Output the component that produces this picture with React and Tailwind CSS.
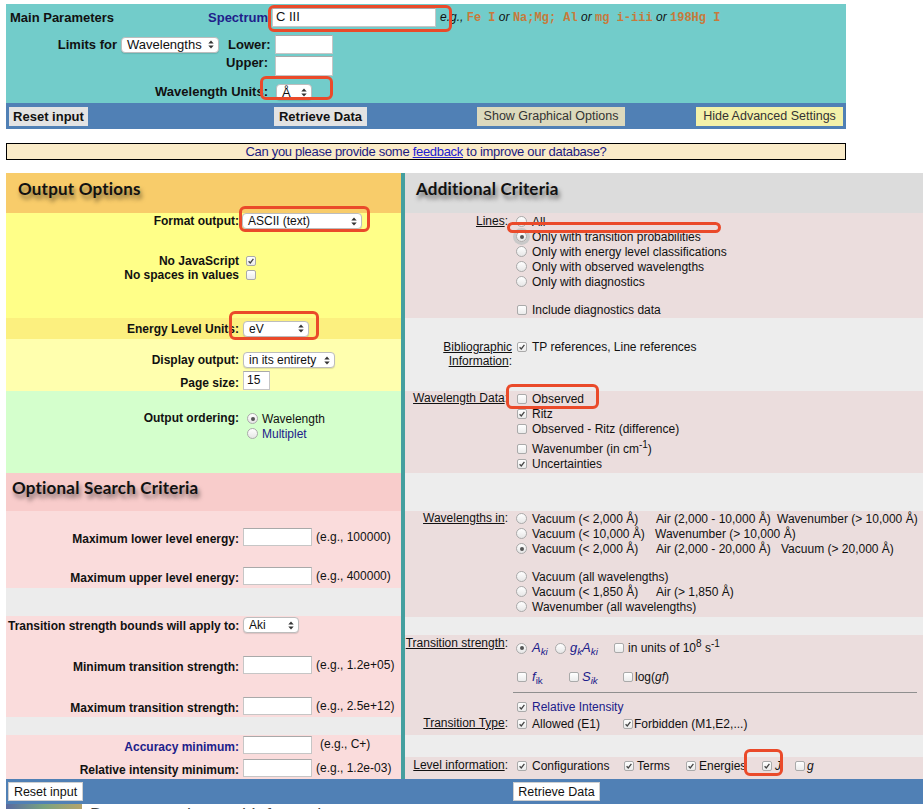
import React from 'react'

const NAVY = 'text-[#20208a]'

function Arrows() {
  return (
    <svg viewBox="0 0 6 10" className="h-[9px] w-[6px] shrink-0" aria-hidden>
      <path d="M0 4 L3 0.5 L6 4 Z" fill="#333" />
      <path d="M0 6 L3 9.5 L6 6 Z" fill="#333" />
    </svg>
  )
}

function Sel({ w, children }) {
  return (
    <div
      className={`flex h-[16px] items-center justify-between rounded-[4px] border border-[#bdbdbd] bg-white pl-[5px] pr-[4px] font-normal leading-none text-[#111] shadow-[0_1px_1px_rgba(0,0,0,0.12)] ${w}`}
    >
      <span className="whitespace-nowrap">{children}</span>
      <Arrows />
    </div>
  )
}

function Inp({ w, h = 'h-[18px]', children }) {
  return (
    <div className={`border border-[#c6c6c6] border-t-[#a9a9a9] bg-white pl-[3px] font-normal leading-[16px] text-[#111] ${w} ${h}`}>
      {children}
    </div>
  )
}

function Cb({ on }) {
  return (
    <span className="flex w-[11px] shrink-0 justify-center">
      <span className="flex h-[10px] w-[10px] items-center justify-center rounded-[2px] border border-[#aaaaaa] bg-linear-to-b from-white to-[#ebebeb]">
        {on && (
          <svg viewBox="0 0 10 10" className="h-[8px] w-[8px]" aria-hidden>
            <path d="M2 5.3 L4.1 7.4 L8 2.4" fill="none" stroke="#444" strokeWidth="1.6" />
          </svg>
        )}
      </span>
    </span>
  )
}

function Rd({ on, focus }) {
  return (
    <span className={`flex h-[11px] w-[11px] shrink-0 items-center justify-center rounded-full border border-[#aaaaaa] bg-linear-to-b from-white to-[#e6e6e6] ${focus ? 'shadow-[0_0_0_3px_#c9c9c9]' : ''}`}>
      {on && <span className="h-[4px] w-[4px] rounded-full bg-[#555]" />}
    </span>
  )
}

function Mark({ cls }) {
  return <div className={`pointer-events-none absolute rounded-[6px] border-[3px] border-[#ea4a2a] ${cls}`} />
}

function Title({ children, cls }) {
  return (
    <div className={`font-['Lato',sans-serif] text-[17px] font-bold leading-[19px] tracking-[0.2px] text-[#111] [text-shadow:2px_4px_4px_rgba(0,0,0,0.5)] ${cls}`}>
      {children}
    </div>
  )
}

function LLabel({ children, cls = '' }) {
  return <span className={`w-[233px] shrink-0 whitespace-nowrap text-right font-bold leading-[14px] ${cls}`}>{children}</span>
}

function RLabel({ children }) {
  return <div className="w-[103px] shrink-0 whitespace-nowrap text-right leading-[15px]">{children}</div>
}

function LeftColumn() {
  return (
    <div className="w-[395px] shrink-0">
      <div className="h-[40px] bg-[#f8cc6a] pl-[12px] pt-[6px]">
        <Title>Output Options</Title>
      </div>

      <div className="h-[105px] bg-[#ffff88]">
        <div className="flex h-[16px] items-center">
          <LLabel>Format output:</LLabel>
          <div className="ml-[3px]">
            <Sel w="w-[120px]">ASCII (text)</Sel>
          </div>
        </div>
        <div className="mt-[25px] flex h-[14px] items-center">
          <LLabel>No JavaScript</LLabel>
          <span className="ml-[6px]"><Cb on /></span>
        </div>
        <div className="flex h-[14px] items-center">
          <LLabel>No spaces in values</LLabel>
          <span className="ml-[6px]"><Cb /></span>
        </div>
      </div>

      <div className="flex h-[21px] items-center bg-[#fcf07f]">
        <LLabel>Energy Level Units:</LLabel>
        <div className="ml-[4px]">
          <Sel w="w-[66px]">eV</Sel>
        </div>
      </div>

      <div className="h-[52px] bg-[#ffffae] pt-[13px]">
        <div className="flex h-[16px] items-center">
          <LLabel>Display output:</LLabel>
          <div className="ml-[4px]">
            <Sel w="w-[92px]">in its entirety</Sel>
          </div>
        </div>
        <div className="mt-[3px] flex h-[19px] items-end">
          <LLabel>Page size:</LLabel>
          <div className="ml-[4px]">
            <Inp w="w-[27px]" h="h-[19px]">15</Inp>
          </div>
        </div>
      </div>

      <div className="h-[82px] bg-[#d4ffcc] pt-[20px]">
        <div className="flex">
          <LLabel cls="leading-[15px]">Output ordering:</LLabel>
          <div className="ml-[8px] flex flex-col">
            <div className="flex h-[15px] items-center gap-[4px]">
              <Rd on /> <span>Wavelength</span>
            </div>
            <div className="flex h-[15px] items-center gap-[4px]">
              <Rd /> <span className={NAVY}>Multiplet</span>
            </div>
          </div>
        </div>
      </div>

      <div className="h-[38px] bg-[#f8cccb] pl-[6px] pt-[5px]">
        <Title>Optional Search Criteria</Title>
      </div>

      <div className="h-[77px] bg-[#fadcdc] pt-[17px]">
        <div className="flex h-[18px] items-end">
          <LLabel>Maximum lower level energy:</LLabel>
          <div className="ml-[4px]"><Inp w="w-[69px]" /></div>
          <span className="mb-[2px] ml-[4px] leading-[14px]">(e.g., 100000)</span>
        </div>
        <div className="mt-[21px] flex h-[18px] items-end">
          <LLabel>Maximum upper level energy:</LLabel>
          <div className="ml-[4px]"><Inp w="w-[69px]" /></div>
          <span className="mb-[2px] ml-[4px] leading-[14px]">(e.g., 400000)</span>
        </div>
      </div>

      <div className="h-[28px] bg-[#ececec]" />

      <div className="h-[101px] bg-[#fadcdc] pt-[1px]">
        <div className="flex h-[16px] items-end">
          <LLabel cls="pl-[2px]">Transition strength bounds will apply to:</LLabel>
          <div className="ml-[4px]">
            <Sel w="w-[56px]">Aki</Sel>
          </div>
        </div>
        <div className="mt-[23px] flex h-[18px] items-end">
          <LLabel>Minimum transition strength:</LLabel>
          <div className="ml-[4px]"><Inp w="w-[69px]" /></div>
          <span className="mb-[2px] ml-[4px] leading-[14px]">(e.g., 1.2e+05)</span>
        </div>
        <div className="mt-[23px] flex h-[18px] items-end">
          <LLabel>Maximum transition strength:</LLabel>
          <div className="ml-[4px]"><Inp w="w-[69px]" /></div>
          <span className="mb-[2px] ml-[4px] leading-[14px]">(e.g., 2.5e+12)</span>
        </div>
      </div>

      <div className="h-[18px] bg-[#ececec]" />

      <div className="h-[44px] bg-[#fadcdc] pt-[1px]">
        <div className="flex h-[18px] items-end">
          <LLabel cls={NAVY}>Accuracy minimum:</LLabel>
          <div className="ml-[4px]"><Inp w="w-[69px]" /></div>
          <span className="mb-[3px] ml-[8px] leading-[14px]">(e.g., C+)</span>
        </div>
        <div className="mt-[5px] flex h-[18px] items-end">
          <LLabel>Relative intensity minimum:</LLabel>
          <div className="ml-[4px]"><Inp w="w-[69px]" /></div>
          <span className="mb-[2px] ml-[4px] leading-[14px]">(e.g., 1.2e-03)</span>
        </div>
      </div>
    </div>
  )
}

function Opt({ type = 'cb', on, focus, children, cls = '' }) {
  return (
    <div className={`flex h-[15px] items-center ${cls}`}>
      {type === 'cb' ? <Cb on={on} /> : <Rd on={on} focus={focus} />}
      <span className="ml-[5px] whitespace-nowrap">{children}</span>
    </div>
  )
}

function RightColumn() {
  return (
    <div className="w-[518px] shrink-0">
      <div className="h-[40px] bg-[#dcdcdc] pl-[11px] pt-[6px]">
        <Title>Additional Criteria</Title>
      </div>

      <div className="h-[105px] bg-[#ebdddd] pt-[1px]">
        <div className="flex">
          <RLabel><span className="underline">Lines</span>:</RLabel>
          <div className="ml-[8px] flex flex-col">
            <Opt type="rd">All</Opt>
            <Opt type="rd" on focus>Only with transition probabilities</Opt>
            <Opt type="rd">Only with energy level classifications</Opt>
            <Opt type="rd">Only with observed wavelengths</Opt>
            <Opt type="rd">Only with diagnostics</Opt>
            <Opt cls="mt-[13px]">Include diagnostics data</Opt>
          </div>
        </div>
      </div>

      <div className="h-[73px] bg-[#ededed] pt-[22px]">
        <div className="flex">
          <div className="w-[107px] shrink-0 text-right leading-[14px]">
            <span className="underline">Bibliographic</span>
            <br />
            <span className="underline">Information</span>:
          </div>
          <div className="ml-[4px] flex h-[14px] items-center">
            <Cb on />
            <span className="ml-[5px]">TP references, Line references</span>
          </div>
        </div>
      </div>

      <div className="h-[82px] bg-[#ebdddd]">
        <div className="flex">
          <RLabel><span className="underline">Wavelength Data</span>:</RLabel>
          <div className="ml-[8px] flex flex-col">
            <Opt>Observed</Opt>
            <Opt on>Ritz</Opt>
            <Opt>Observed - Ritz (difference)</Opt>
            <Opt cls="mt-[5px]">
              Wavenumber (in cm<sup className="text-[10px]">-1</sup>)
            </Opt>
            <Opt on>Uncertainties</Opt>
          </div>
        </div>
      </div>

      <div className="h-[38px] bg-[#ededed]" />

      <div className="h-[106px] bg-[#ebdddd]">
        <div className="flex">
          <RLabel><span className="underline">Wavelengths in</span>:</RLabel>
          <div className="ml-[8px] flex flex-col">
            <div className="flex h-[15px] items-center whitespace-nowrap">
              <Rd /><span className="ml-[5px] w-[124px]">Vacuum (&lt; 2,000 Å)</span>
              <span className="w-[121px]">Air (2,000 - 10,000 Å)</span>
              <span>Wavenumber (&gt; 10,000 Å)</span>
            </div>
            <div className="flex h-[15px] items-center whitespace-nowrap">
              <Rd /><span className="ml-[5px] w-[123px]">Vacuum (&lt; 10,000 Å)</span>
              <span>Wavenumber (&gt; 10,000 Å)</span>
            </div>
            <div className="flex h-[15px] items-center whitespace-nowrap">
              <Rd on /><span className="ml-[5px] w-[124px]">Vacuum (&lt; 2,000 Å)</span>
              <span className="w-[125px]">Air (2,000 - 20,000 Å)</span>
              <span>Vacuum (&gt; 20,000 Å)</span>
            </div>
            <div className="mt-[13px] flex h-[15px] items-center whitespace-nowrap">
              <Rd /><span className="ml-[5px]">Vacuum (all wavelengths)</span>
            </div>
            <div className="flex h-[15px] items-center whitespace-nowrap">
              <Rd /><span className="ml-[5px] w-[124px]">Vacuum (&lt; 1,850 Å)</span>
              <span>Air (&gt; 1,850 Å)</span>
            </div>
            <div className="flex h-[15px] items-center whitespace-nowrap">
              <Rd /><span className="ml-[5px]">Wavenumber (all wavelengths)</span>
            </div>
          </div>
        </div>
      </div>

      <div className="h-[18px] bg-[#ededed]" />

      <div className="h-[100px] bg-[#ebdddd] pt-[1px]">
        <div className="flex">
          <RLabel><span className="underline">Transition strength</span>:</RLabel>
          <div className="ml-[8px] flex h-[24px] items-center whitespace-nowrap">
            <Rd on />
            <i className={`ml-[5px] w-[23px] text-[13px] ${NAVY}`}>A<sub>ki</sub></i>
            <Rd />
            <i className={`ml-[4px] w-[39px] text-[13px] ${NAVY}`}>g<sub>k</sub>A<sub>ki</sub></i>
            <span className="ml-[4px]"><Cb /></span>
            <span className="ml-[4px]">in units of 10<sup className="text-[10px]">8</sup> s<sup className="text-[10px]">-1</sup></span>
          </div>
        </div>
        <div className="mt-[7px] flex h-[20px] items-center whitespace-nowrap pl-[111px]">
          <Cb />
          <i className={`ml-[5px] w-[36px] text-[13px] ${NAVY}`}>f<sub className="not-italic">ik</sub></i>
          <Cb />
          <i className={`ml-[3px] w-[40px] text-[13px] ${NAVY}`}>S<sub>ik</sub></i>
          <Cb />
          <span className="ml-[2px]">log(<i>gf</i>)</span>
        </div>
        <div className="ml-[108px] mt-[5px] h-px w-[404px] bg-[#8f8f8f]" />
        <div className="mt-[6px] pl-[111px]">
          <Opt on><span className={NAVY}>Relative Intensity</span></Opt>
        </div>
        <div className="mt-[2px] flex">
          <RLabel><span className="underline">Transition Type</span>:</RLabel>
          <div className="ml-[8px] flex h-[15px] items-center whitespace-nowrap">
            <Cb on />
            <span className="ml-[5px] w-[90px]">Allowed (E1)</span>
            <Cb on />
            <span className="ml-[1px]">Forbidden (M1,E2,...)</span>
          </div>
        </div>
      </div>

      <div className="h-[22px] bg-[#ededed]" />

      <div className="h-[22px] bg-[#ebdddd] pt-[1px]">
        <div className="flex">
          <RLabel><span className="underline">Level information</span>:</RLabel>
          <div className="ml-[8px] flex h-[15px] items-center whitespace-nowrap">
            <Cb on />
            <span className="ml-[5px] w-[91px]">Configurations</span>
            <Cb on />
            <span className="ml-[3px] w-[48px]">Terms</span>
            <Cb on />
            <span className="ml-[3px] w-[62px]">Energies</span>
            <Cb on />
            <i className="ml-[3px] w-[19px]">J</i>
            <Cb />
            <i className="ml-[2px]">g</i>
          </div>
        </div>
      </div>
    </div>
  )
}

export default function App() {
  return (
    <div className="relative min-h-[809px] w-[923px] overflow-hidden bg-white pl-[6px] pt-[4px] font-['Liberation_Sans',Arial,sans-serif] text-[12px] text-[#111]">
      <div className="h-[99px] w-[840px] bg-[#72ccca] pt-[4px] text-[13px] font-bold">
        <div className="flex h-[19px] items-center">
          <div className="flex w-[262px] justify-between pl-[4px]">
            <span>Main Parameters</span>
            <span className={NAVY}>Spectrum</span>
          </div>
          <div className="ml-[4px]">
            <Inp w="w-[164px]" h="h-[19px]">C III</Inp>
          </div>
          <span className="ml-[4px] whitespace-pre text-[12px] font-normal">
            <i>e.g.,</i>{' '}
            <b className="font-['Liberation_Mono',monospace] text-[#c77a3b]">Fe I</b> <i>or</i>{' '}
            <b className="font-['Liberation_Mono',monospace] text-[#c77a3b]">Na;Mg; Al</b> <i>or</i>{' '}
            <b className="font-['Liberation_Mono',monospace] text-[#c77a3b]">mg i-iii</b> <i>or</i>{' '}
            <b className="font-['Liberation_Mono',monospace] text-[#c77a3b]">198Hg I</b>
          </span>
        </div>
        <div className="mt-[8px] flex h-[19px] items-center">
          <div className="w-[111px] text-right">Limits for</div>
          <div className="ml-[4px]">
            <Sel w="w-[98px]">Wavelengths</Sel>
          </div>
          <div className="ml-[9px] w-[40px] text-right">Lower:</div>
          <div className="ml-[7px]">
            <Inp w="w-[58px]" h="h-[19px]" />
          </div>
        </div>
        <div className="mt-[2px] flex h-[20px] items-start">
          <div className="w-[262px] text-right leading-[14px]">Upper:</div>
          <div className="ml-[7px]">
            <Inp w="w-[58px]" h="h-[20px]" />
          </div>
        </div>
        <div className="mt-[8px] flex h-[16px] items-center">
          <div className="w-[262px] text-right">Wavelength Units:</div>
          <div className="ml-[8px]">
            <Sel w="w-[36px]">Å</Sel>
          </div>
        </div>
      </div>

      <div className="flex h-[26px] w-[840px] items-center bg-[#5080b5] text-[13px]">
        <button type="button" className="ml-[3px] h-[19px] w-[79px] bg-[#e3e3e3] font-bold">Reset input</button>
        <button type="button" className="ml-[186px] h-[19px] w-[93px] bg-[#e3e3e3] font-bold">Retrieve Data</button>
        <button type="button" className="ml-[110px] h-[19px] w-[148px] bg-[#dcd9bd] text-[12.5px] text-[#333]">Show Graphical Options</button>
        <button type="button" className="ml-[71px] h-[19px] w-[147px] bg-[#f3f1a9] text-[12.5px] text-[#333]">Hide Advanced Settings</button>
      </div>

      <div className="mt-[14px] h-[17px] w-[840px] border border-black bg-[#faebc8] text-center font-['Liberation_Sans_Narrow','Liberation_Sans',sans-serif] text-[13px] leading-[15px] tracking-[-0.3px] text-[#1a1a80]">
        Can you please provide some <span className="text-[#2020d0] underline">feedback</span> to improve our database?
      </div>

      <div className="mt-[13px] flex w-[917px]">
        <LeftColumn />
        <div className="w-[4px] shrink-0 bg-[#449f9f]" />
        <RightColumn />
      </div>

      <div className="flex h-[25px] w-[917px] items-center bg-[#5080b5] text-[12.5px]">
        <button type="button" className="ml-[2px] h-[19px] w-[75px] border border-[#cfcfcf] bg-white">Reset input</button>
        <button type="button" className="ml-[430px] h-[19px] w-[87px] border border-[#cfcfcf] bg-white">Retrieve Data</button>
      </div>

      <div className="flex h-[22px] items-start">
        <div className="h-[22px] w-[76px] bg-linear-to-r from-[#5a6aa0] via-[#7aa27e] to-[#b4a46c]" />
        <span className="ml-[8px] text-[18px] leading-[22px] text-[#444]">Documentation and Information</span>
      </div>

      <Mark cls="left-[268px] top-[5px] h-[27px] w-[184px]" />
      <Mark cls="left-[260px] top-[76px] h-[24px] w-[73px]" />
      <Mark cls="left-[239px] top-[206px] h-[26px] w-[131px]" />
      <Mark cls="left-[229px] top-[311px] h-[29px] w-[90px]" />
      <Mark cls="left-[507px] top-[222px] h-[11px] w-[214px]" />
      <Mark cls="left-[506px] top-[384px] h-[25px] w-[93px]" />
      <Mark cls="left-[744px] top-[749px] h-[27px] w-[39px]" />
    </div>
  )
}
